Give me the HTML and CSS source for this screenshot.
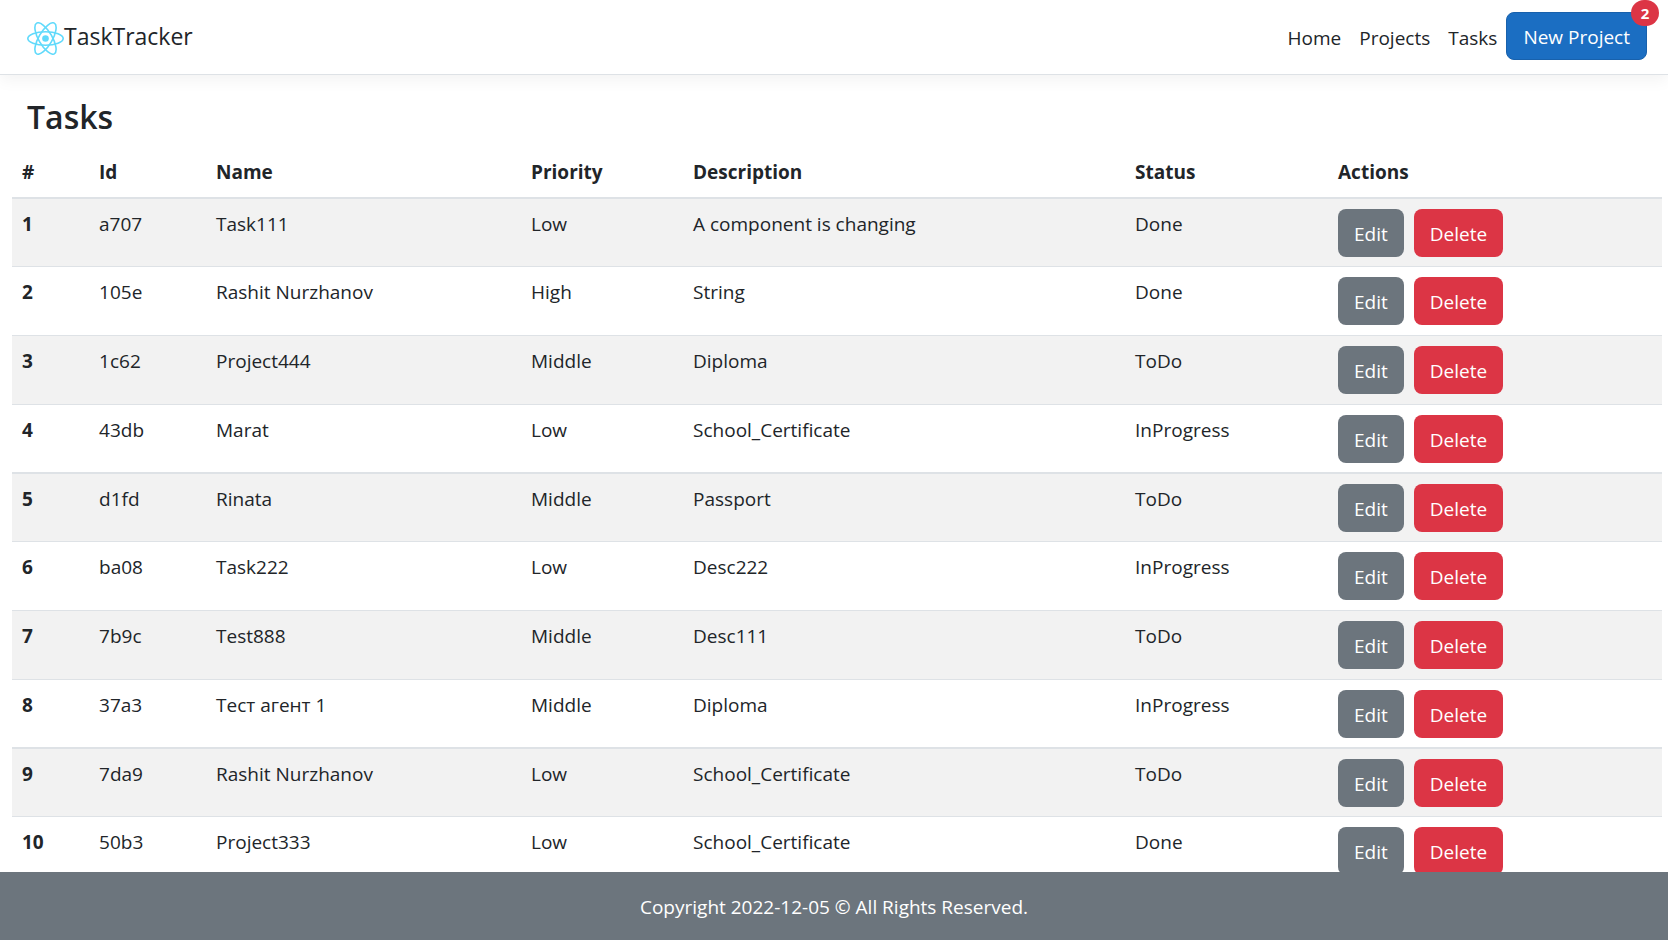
FILE: index.html
```html
<!DOCTYPE html>
<html lang="en">
<head>
<meta charset="utf-8">
<title>TaskTracker</title>
<meta name="viewport" content="width=device-width, initial-scale=1">
<link rel="stylesheet" href="styles.css">
</head>
<body>
<header class="navbar">
  <a class="brand" href="#">
    <svg class="brand-logo" viewBox="-11.5 -10.23 23 20.46" aria-hidden="true">
      <circle r="2.05" fill="#61dafb"/>
      <g fill="none" stroke="#61dafb">
        <ellipse rx="11" ry="4.2"/>
        <ellipse rx="11" ry="4.2" transform="rotate(60)"/>
        <ellipse rx="11" ry="4.2" transform="rotate(120)"/>
      </g>
    </svg>
    <span class="brand-name">TaskTracker</span>
  </a>
  <nav class="nav">
    <a class="nav-link" href="#">Home</a>
    <a class="nav-link" href="#">Projects</a>
    <a class="nav-link" href="#">Tasks</a>
    <button class="btn btn-primary" type="button">New Project<span class="badge">2</span></button>
  </nav>
</header>
<main class="content">
  <h1 class="title">Tasks</h1>
  <table class="tasks">
    <colgroup>
      <col class="col-num"><col class="col-id"><col class="col-name"><col class="col-priority"><col class="col-desc"><col class="col-status"><col class="col-actions">
    </colgroup>
    <thead>
      <tr><th scope="col">#</th><th scope="col">Id</th><th scope="col">Name</th><th scope="col">Priority</th><th scope="col">Description</th><th scope="col">Status</th><th scope="col">Actions</th></tr>
    </thead>
    <tbody>
      <tr><th scope="row">1</th><td>a707</td><td>Task111</td><td>Low</td><td>A component is changing</td><td>Done</td><td><div class="actions"><button class="btn btn-secondary" type="button">Edit</button><button class="btn btn-danger" type="button">Delete</button></div></td></tr>
      <tr><th scope="row">2</th><td>105e</td><td>Rashit Nurzhanov</td><td>High</td><td>String</td><td>Done</td><td><div class="actions"><button class="btn btn-secondary" type="button">Edit</button><button class="btn btn-danger" type="button">Delete</button></div></td></tr>
      <tr><th scope="row">3</th><td>1c62</td><td>Project444</td><td>Middle</td><td>Diploma</td><td>ToDo</td><td><div class="actions"><button class="btn btn-secondary" type="button">Edit</button><button class="btn btn-danger" type="button">Delete</button></div></td></tr>
      <tr><th scope="row">4</th><td>43db</td><td>Marat</td><td>Low</td><td>School_Certificate</td><td>InProgress</td><td><div class="actions"><button class="btn btn-secondary" type="button">Edit</button><button class="btn btn-danger" type="button">Delete</button></div></td></tr>
      <tr><th scope="row">5</th><td>d1fd</td><td>Rinata</td><td>Middle</td><td>Passport</td><td>ToDo</td><td><div class="actions"><button class="btn btn-secondary" type="button">Edit</button><button class="btn btn-danger" type="button">Delete</button></div></td></tr>
      <tr><th scope="row">6</th><td>ba08</td><td>Task222</td><td>Low</td><td>Desc222</td><td>InProgress</td><td><div class="actions"><button class="btn btn-secondary" type="button">Edit</button><button class="btn btn-danger" type="button">Delete</button></div></td></tr>
      <tr><th scope="row">7</th><td>7b9c</td><td>Test888</td><td>Middle</td><td>Desc111</td><td>ToDo</td><td><div class="actions"><button class="btn btn-secondary" type="button">Edit</button><button class="btn btn-danger" type="button">Delete</button></div></td></tr>
      <tr><th scope="row">8</th><td>37a3</td><td>Тест агент 1</td><td>Middle</td><td>Diploma</td><td>InProgress</td><td><div class="actions"><button class="btn btn-secondary" type="button">Edit</button><button class="btn btn-danger" type="button">Delete</button></div></td></tr>
      <tr><th scope="row">9</th><td>7da9</td><td>Rashit Nurzhanov</td><td>Low</td><td>School_Certificate</td><td>ToDo</td><td><div class="actions"><button class="btn btn-secondary" type="button">Edit</button><button class="btn btn-danger" type="button">Delete</button></div></td></tr>
      <tr><th scope="row">10</th><td>50b3</td><td>Project333</td><td>Low</td><td>School_Certificate</td><td>Done</td><td><div class="actions"><button class="btn btn-secondary" type="button">Edit</button><button class="btn btn-danger" type="button">Delete</button></div></td></tr>
    </tbody>
  </table>
</main>
<footer class="footer">Copyright 2022-12-05 © All Rights Reserved.</footer>
</body>
</html>
```
FILE: styles.css
```css
* { box-sizing: border-box; }

body {
  margin: 0;
  height: 100vh;
  display: flex;
  flex-direction: column;
  font-family: "Segoe UI", "Open Sans", "Noto Sans", sans-serif;
  font-size: 19px;
  line-height: 30px;
  color: #212529;
  background: #fff;
}

a { color: inherit; text-decoration: none; }

.navbar {
  position: relative;
  z-index: 1;
  display: flex;
  justify-content: space-between;
  align-items: flex-start;
  padding: 12px 21px 14px 27px;
  border-bottom: 1px solid #dee2e6;
  box-shadow: 0 5px 15px rgba(0, 0, 0, 0.05);
  background: #fff;
}

.brand {
  display: flex;
  align-items: flex-start;
  padding-top: 9px;
  font-size: 23px;
}

.brand-logo { width: 37px; height: 33px; margin-top: 1px; }

.nav { display: flex; align-items: center; }

.nav-link { padding: 3px 9px 0; }

.btn {
  height: 48px;
  padding: 1px 16px 0;
  border: 0;
  border-radius: 8px;
  font: inherit;
  color: #fff;
  cursor: pointer;
}

.btn-primary { position: relative; background: #1b6ec2; border: 1px solid #1861ac; }
.btn-secondary { background: #6c757d; }
.btn-danger { background: #dc3545; }

.badge {
  position: absolute;
  top: -13px;
  right: -13px;
  width: 28px;
  height: 26px;
  border-radius: 13px;
  background: #dc3545;
  font-size: 15px;
  font-weight: 700;
  line-height: 26px;
  text-align: center;
}

.content {
  flex: 1;
  min-height: 0;
  overflow-y: auto;
  scrollbar-width: none;
  padding: 21px 6px 0 12px;
}

.title {
  margin: 0 0 9px;
  padding-left: 15px;
  font-size: 32px;
  font-weight: 600;
  line-height: 42px;
}

.tasks {
  width: 100%;
  table-layout: fixed;
  border-collapse: separate;
  border-spacing: 0;
}

.col-num { width: 4.67%; }
.col-id { width: 7.09%; }
.col-name { width: 19.09%; }
.col-priority { width: 9.82%; }
.col-desc { width: 26.79%; }
.col-status { width: 12.3%; }
.col-actions { width: 20.24%; }

.tasks th,
.tasks td {
  padding: 10px;
  text-align: left;
  vertical-align: top;
  border-bottom: 1px solid #dee2e6;
}

.tasks thead th { border-bottom-width: 2px; }

.tasks tbody tr:nth-child(odd) { background: #f2f2f2; }
.tasks tbody tr:nth-child(4n+1) > * { padding-bottom: 9px; }
.tasks tbody tr:nth-child(4n) > * { padding-bottom: 9px; border-bottom-width: 2px; }

.actions { display: flex; gap: 10px; }

.footer {
  padding: 20px 0 18px;
  background: #6c757d;
  color: #fff;
  text-align: center;
}
```
